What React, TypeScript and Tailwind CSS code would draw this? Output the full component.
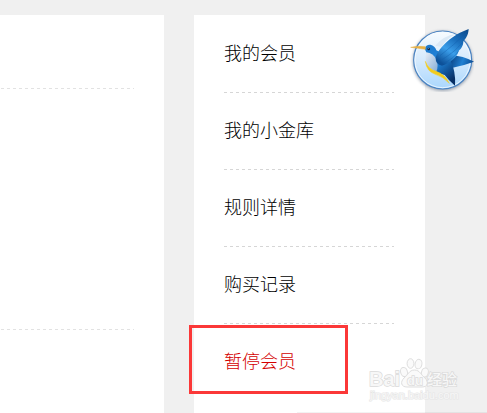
const menu = [
  { label: "我的会员", href: "#member" },
  { label: "我的小金库", href: "#vault" },
  { label: "规则详情", href: "#rules" },
  { label: "购买记录", href: "#orders" },
  { label: "暂停会员", href: "#pause", active: true },
];

function BirdBadge() {
  return (
    <svg viewBox="30 33 192 198" className="w-16" aria-hidden="true">
      <defs>
        <linearGradient id="disc" x1="0" y1="0" x2="0" y2="1">
          <stop offset="0" stopColor="#f8fcff" />
          <stop offset="0.5" stopColor="#d5eafd" />
          <stop offset="1" stopColor="#a9d6fd" />
        </linearGradient>
        <linearGradient id="wing" x1="0.9" y1="0" x2="0.3" y2="1">
          <stop offset="0" stopColor="#0e4c8c" />
          <stop offset="0.35" stopColor="#1a6fbd" />
          <stop offset="0.65" stopColor="#3a9eea" />
          <stop offset="1" stopColor="#0d5199" />
        </linearGradient>
        <linearGradient id="body" x1="0" y1="0" x2="0.7" y2="1">
          <stop offset="0" stopColor="#1d78cb" />
          <stop offset="0.5" stopColor="#1f83d9" />
          <stop offset="1" stopColor="#062f66" />
        </linearGradient>
        <linearGradient id="tail" x1="0" y1="0" x2="1" y2="0.2">
          <stop offset="0" stopColor="#083a78" />
          <stop offset="0.6" stopColor="#2180d2" />
          <stop offset="1" stopColor="#0c4f99" />
        </linearGradient>
        <linearGradient id="belly" x1="0" y1="0" x2="1" y2="1">
          <stop offset="0" stopColor="#e6edf6" />
          <stop offset="1" stopColor="#86add6" />
        </linearGradient>
        <filter id="glow" x="-20%" y="-20%" width="140%" height="140%">
          <feGaussianBlur stdDeviation="4" />
        </filter>
      </defs>
      <circle cx="128" cy="138" r="90" fill="#66768c" opacity="0.6" filter="url(#glow)" />
      <circle cx="128" cy="135" r="87" fill="url(#disc)" stroke="#4a83c2" strokeWidth="3.5" />
      <circle cx="128" cy="135" r="83" fill="none" stroke="#f4faff" strokeWidth="3" opacity="0.8" />
      <path d="M106 92Q130 62 168 57Q140 70 124 96Z" fill="#dbe9f6" />
      <path d="M148 122Q180 118 222 140Q190 152 152 160Z" fill="url(#tail)" />
      <path d="M74 101Q78 88 91 89Q105 92 109 106Q135 118 152 138Q168 170 165 212Q146 196 134 180Q108 172 92 158Q78 140 80 114Z" fill="url(#body)" />
      <path d="M79 112Q100 114 110 135Q116 155 109 170Q84 160 77 140Q75 122 79 112Z" fill="url(#belly)" />
      <path d="M107 128C116 96 158 59 206 42C205 62 196 72 190 79C190 93 183 102 176 108C172 126 152 144 126 152Q106 148 107 128Z" fill="url(#wing)" />
      <path d="M120 122Q160 92 200 52M126 134Q166 110 190 79M130 145Q160 132 176 108" fill="none" stroke="#0f5ba8" strokeWidth="1.2" />
      <path d="M76 139Q84 162 108 169Q134 177 148 205Q128 184 106 178Q80 170 76 139Z" fill="#f3cc1c" stroke="#f3cc1c" strokeWidth="1.5" />
      <path d="M32 97Q55 92 76 95L76 103Q56 100 32 97Z" fill="#e7b044" stroke="#e7b044" strokeWidth="1.5" />
      <circle cx="86" cy="102" r="4" fill="#08264e" />
      <circle cx="85" cy="101" r="1.3" fill="#d8ecff" />
    </svg>
  );
}

function Watermark() {
  return (
    <svg viewBox="0 0 96 48" className="w-24" role="img" aria-label="Baidu 经验">
      <g fill="#fafafa" stroke="#dedede" strokeWidth="1">
        <ellipse cx="38" cy="16" rx="3.4" ry="4.6" transform="rotate(-15 38 16)" />
        <ellipse cx="44.5" cy="7.5" rx="3.4" ry="4.8" />
        <ellipse cx="52.5" cy="8" rx="3.4" ry="4.8" transform="rotate(12 52 8)" />
        <ellipse cx="59" cy="16.5" rx="3.4" ry="4.6" transform="rotate(15 59 16)" />
        <path d="M48.5 14C43 14 42 19 38 22C34 26 35 31 41 31H56C62 31 63 26 59 22C55 19 54 14 48.5 14Z" />
      </g>
      <g fill="#f7f7f7" stroke="#dadada" strokeWidth="1.4" paintOrder="stroke">
        <text x="3" y="30" fontFamily="Liberation Sans, sans-serif" fontSize="20" fontWeight="700">Bai</text>
        <text x="41" y="29" fontFamily="Liberation Sans, sans-serif" fontSize="13" fontWeight="700">du</text>
        <text x="61" y="29" fontFamily="Noto Sans CJK SC, sans-serif" fontSize="15" fontWeight="500">经验</text>
      </g>
      <text x="4" y="43" fontFamily="Liberation Sans, sans-serif" fontSize="11" fill="#f7f7f7" stroke="#e6e6e6" strokeWidth="1.2" paintOrder="stroke">jingyan.baidu.com</text>
    </svg>
  );
}

export default function App() {
  return (
    <div className="relative flex min-h-screen gap-[30px] overflow-hidden bg-[#f0f0f0] pt-[15px] font-['Noto_Sans_CJK_SC',sans-serif]">
      <main className="flex w-[164px] shrink-0 flex-col gap-60 bg-white pt-[73px] pr-[30px]">
        <div className="h-px bg-[repeating-linear-gradient(90deg,transparent_0_1px,#e2e2e2_1px_4px,transparent_4px_6px)]" />
        <div className="h-px bg-[repeating-linear-gradient(90deg,transparent_0_1px,#e2e2e2_1px_4px,transparent_4px_6px)]" />
      </main>

      <nav className="w-[231px] shrink-0 bg-white pt-px pr-[31px] pl-[30px]">
        <ul>
          {menu.map((item, i) => (
            <li key={item.href} className="text-lg">
              {i > 0 && (
                <div className="h-px bg-[repeating-linear-gradient(90deg,#d6d6d6_0_3px,transparent_3px_6px)]" />
              )}
              {item.active ? (
                <a
                  href={item.href}
                  className="mt-px -ml-[35px] flex h-[69px] w-[159px] items-center border-3 border-[#fb3838] pt-px pl-8 font-light text-[#d40000]"
                >
                  {item.label}
                </a>
              ) : (
                <a href={item.href} className="flex h-19 items-center pb-1 font-light text-black">
                  {item.label}
                </a>
              )}
            </li>
          ))}
        </ul>
      </nav>

      <div className="pointer-events-none absolute inset-0 flex flex-col items-end justify-between pt-[26px]">
        <div className="pr-[13px]">
          <BirdBadge />
        </div>
        <div className="flex w-[190px] justify-end border-b border-black/5 pr-[25px] pb-2">
          <Watermark />
        </div>
      </div>
    </div>
  );
}
